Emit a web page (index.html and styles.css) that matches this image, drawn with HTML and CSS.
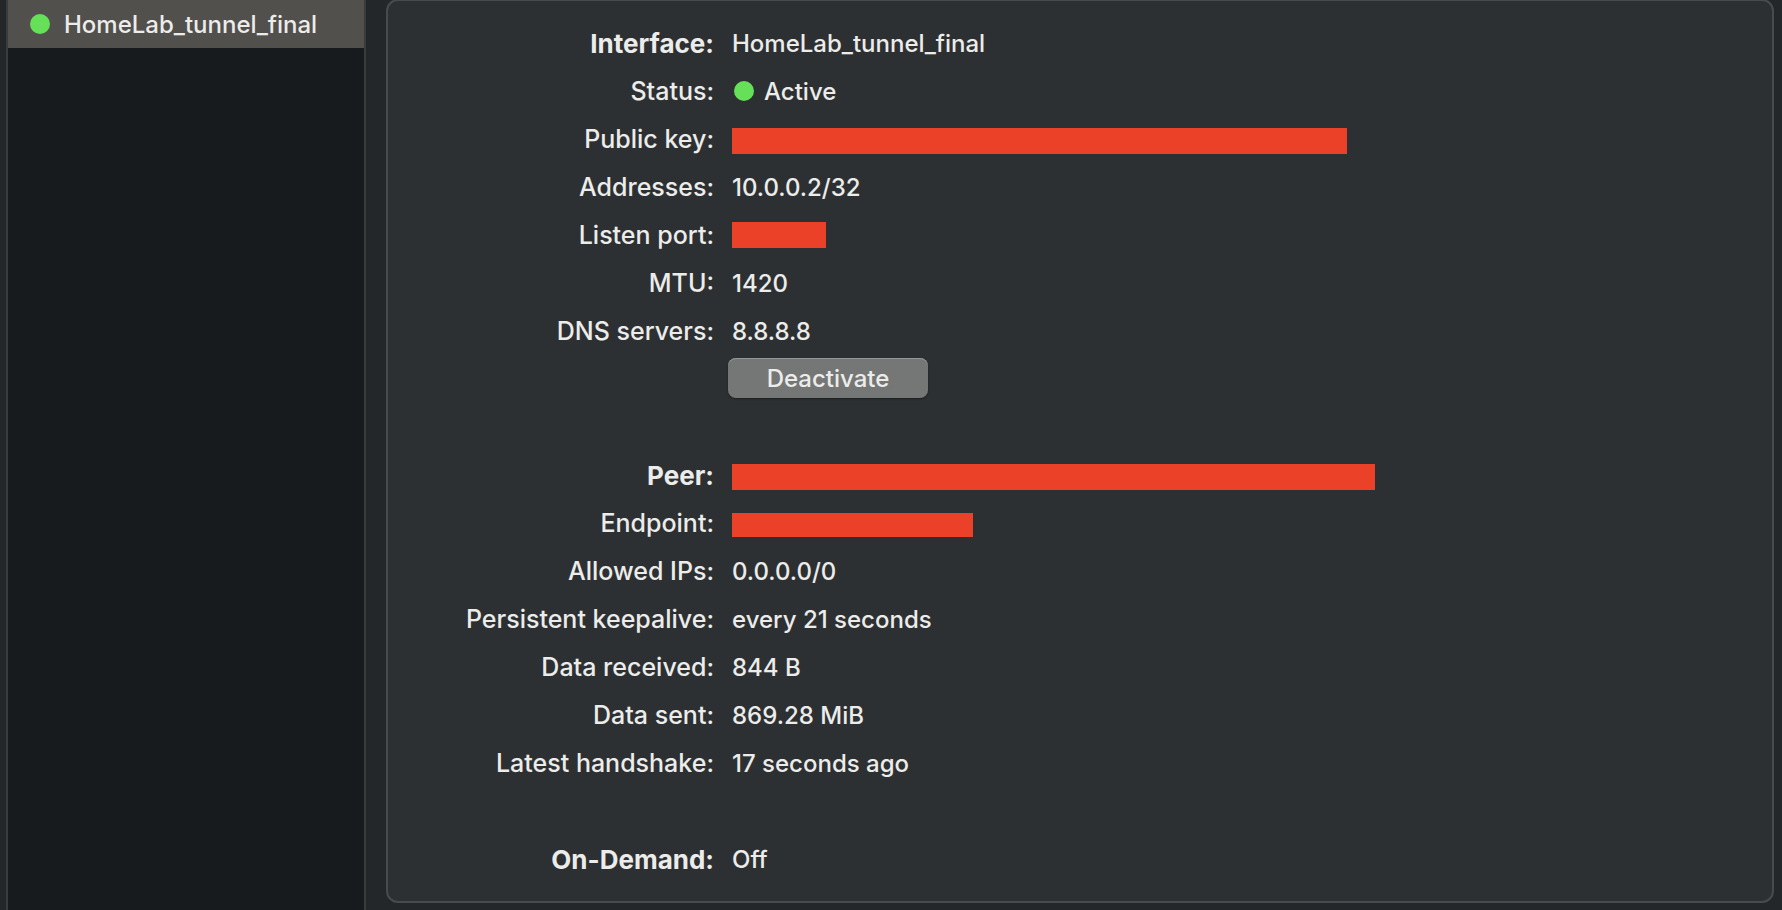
FILE: index.html
```html
<!DOCTYPE html>
<html lang="en">
<head>
<meta charset="utf-8">
<title>Manage Tunnels</title>
<link rel="stylesheet" href="styles.css">
</head>
<body>
<div class="window">
  <nav class="tunnel-list" aria-label="Tunnels">
    <button class="tunnel" type="button" aria-current="true"><span class="dot"></span>HomeLab_tunnel_final</button>
  </nav>
  <main class="detail">
    <dl class="group">
      <div class="row"><dt class="title">Interface:</dt><dd>HomeLab_tunnel_final</dd></div>
      <div class="row"><dt>Status:</dt><dd class="status"><span class="dot"></span>Active</dd></div>
      <div class="row"><dt>Public key:</dt><dd><span class="redacted public-key"></span></dd></div>
      <div class="row"><dt>Addresses:</dt><dd>10.0.0.2/32</dd></div>
      <div class="row"><dt>Listen port:</dt><dd><span class="redacted port"></span></dd></div>
      <div class="row"><dt>MTU:</dt><dd>1420</dd></div>
      <div class="row"><dt>DNS servers:</dt><dd>8.8.8.8</dd></div>
    </dl>
    <div class="actions"><button class="deactivate" type="button">Deactivate</button></div>
    <dl class="group">
      <div class="row"><dt class="title">Peer:</dt><dd><span class="redacted peer-key"></span></dd></div>
      <div class="row"><dt>Endpoint:</dt><dd><span class="redacted endpoint"></span></dd></div>
      <div class="row"><dt>Allowed IPs:</dt><dd>0.0.0.0/0</dd></div>
      <div class="row"><dt>Persistent keepalive:</dt><dd>every 21 seconds</dd></div>
      <div class="row"><dt>Data received:</dt><dd>844 B</dd></div>
      <div class="row"><dt>Data sent:</dt><dd>869.28 MiB</dd></div>
      <div class="row"><dt>Latest handshake:</dt><dd>17 seconds ago</dd></div>
    </dl>
    <dl class="group">
      <div class="row"><dt class="title">On-Demand:</dt><dd>Off</dd></div>
    </dl>
  </main>
</div>
</body>
</html>
```
FILE: styles.css
```css
* {
  box-sizing: border-box;
}

body {
  margin: 0;
  background: #232729;
  color: #ececea;
  font-family: Inter, "Liberation Sans", sans-serif;
  font-size: 24px;
  font-weight: 450;
}

button {
  border: 0;
  color: inherit;
  font: inherit;
}

.window {
  display: flex;
  gap: 20px;
  min-height: 100vh;
  padding: 0 8px 0 6px;
  overflow: hidden;
}

.tunnel-list {
  flex: 0 0 360px;
  border: solid #3a3b3b;
  border-width: 0 2px;
  background: #171b1d;
}

.tunnel {
  display: flex;
  align-items: center;
  gap: 14px;
  width: 100%;
  height: 48px;
  padding: 0 22px;
  background: #51504d;
}

.dot {
  flex: none;
  width: 20px;
  height: 20px;
  border-radius: 50%;
  background: #65e058;
}

.detail {
  display: flex;
  flex: 1;
  flex-direction: column;
  gap: 48px;
  align-self: flex-start;
  margin-top: -1px;
  padding: 18px 0;
  border: 2px solid #484b4d;
  border-radius: 12px;
  background: #2d3032;
}

.group {
  margin: 0;
}

.row {
  display: grid;
  grid-template-columns: 326px 1fr;
  gap: 18px;
  align-items: center;
  height: 48px;
}

dt {
  font-size: 25px;
  text-align: right;
}

.title {
  font-size: 26px;
  font-weight: 700;
}

dd {
  margin: 0;
}

.status {
  display: flex;
  align-items: center;
  gap: 10px;
  padding-left: 2px;
}

.redacted {
  display: block;
  height: 26px;
  background: #eb4128;
}

.public-key,
.peer-key,
.endpoint {
  margin-top: 4px;
}

.public-key {
  width: 615px;
}

.port {
  width: 94px;
}

.peer-key {
  width: 643px;
}

.endpoint {
  width: 241px;
  height: 24px;
}

.actions {
  height: 48px;
  margin-top: -48px;
  padding: 3px 0 0 340px;
}

.deactivate {
  width: 200px;
  height: 40px;
  border-radius: 8px;
  background: #757776;
  box-shadow: inset 0 1px #969897, 0 1px 2px #1d2021;
}
```
